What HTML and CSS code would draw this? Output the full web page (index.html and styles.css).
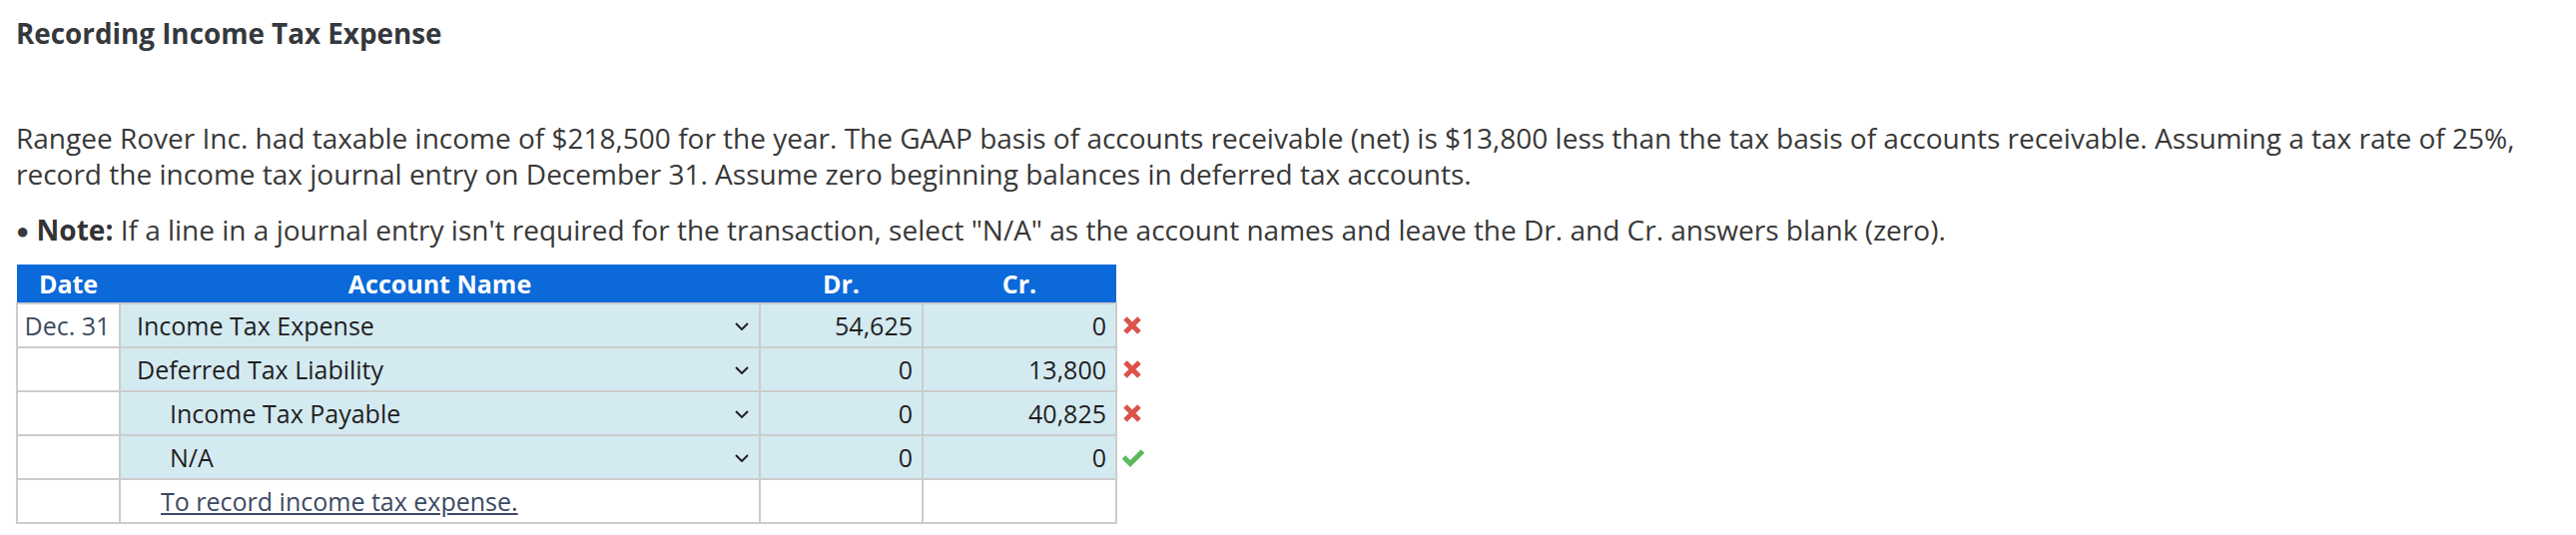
FILE: index.html
```html
<!DOCTYPE html>
<html lang="en">
<head>
<meta charset="utf-8">
<title>Recording Income Tax Expense</title>
<link rel="stylesheet" href="styles.css">
</head>
<body>
<div class="page">
  <h1 class="title">Recording Income Tax Expense</h1>
  <p class="problem">Rangee Rover Inc. had taxable income of $218,500 for the year. The GAAP basis of accounts receivable (net) is $13,800 less than the tax basis of accounts receivable. Assuming a tax rate of 25%, record the income tax journal entry on December 31. Assume zero beginning balances in deferred tax accounts.</p>
  <p class="note"><span class="bullet">&#9679;</span> <strong>Note:</strong> If a line in a journal entry isn't required for the transaction, select "N/A" as the account names and leave the Dr. and Cr. answers blank (zero).</p>
  <table class="journal">
    <colgroup>
      <col class="w-date"><col class="w-acct"><col class="w-dr"><col class="w-cr"><col class="w-mark">
    </colgroup>
    <thead>
      <tr><th>Date</th><th>Account Name</th><th>Dr.</th><th>Cr.</th><th class="mark-head"></th></tr>
    </thead>
    <tbody>
      <tr>
        <td class="date">Dec. 31</td>
        <td class="acct"><div class="select"><span>Income Tax Expense</span><svg class="chev" width="14" height="8" viewBox="0 0 14 8"><polyline points="1,1 7,7 13,1" fill="none" stroke="#222" stroke-width="2"/></svg></div></td>
        <td class="amt">54,625</td>
        <td class="amt">0</td>
        <td class="mark"><svg width="22" height="22" viewBox="0 0 22 22"><path d="M4 4 L18 18 M18 4 L4 18" stroke="#dc5349" stroke-width="5" stroke-linecap="butt"/></svg></td>
      </tr>
      <tr>
        <td class="date"></td>
        <td class="acct"><div class="select"><span>Deferred Tax Liability</span><svg class="chev" width="14" height="8" viewBox="0 0 14 8"><polyline points="1,1 7,7 13,1" fill="none" stroke="#222" stroke-width="2"/></svg></div></td>
        <td class="amt">0</td>
        <td class="amt">13,800</td>
        <td class="mark"><svg width="22" height="22" viewBox="0 0 22 22"><path d="M4 4 L18 18 M18 4 L4 18" stroke="#dc5349" stroke-width="5" stroke-linecap="butt"/></svg></td>
      </tr>
      <tr>
        <td class="date"></td>
        <td class="acct credit"><div class="select"><span>Income Tax Payable</span><svg class="chev" width="14" height="8" viewBox="0 0 14 8"><polyline points="1,1 7,7 13,1" fill="none" stroke="#222" stroke-width="2"/></svg></div></td>
        <td class="amt">0</td>
        <td class="amt">40,825</td>
        <td class="mark"><svg width="22" height="22" viewBox="0 0 22 22"><path d="M4 4 L18 18 M18 4 L4 18" stroke="#dc5349" stroke-width="5" stroke-linecap="butt"/></svg></td>
      </tr>
      <tr>
        <td class="date"></td>
        <td class="acct credit"><div class="select"><span>N/A</span><svg class="chev" width="14" height="8" viewBox="0 0 14 8"><polyline points="1,1 7,7 13,1" fill="none" stroke="#222" stroke-width="2"/></svg></div></td>
        <td class="amt">0</td>
        <td class="amt">0</td>
        <td class="mark"><svg width="24" height="22" viewBox="0 0 24 22"><path d="M2.5 11 L9 17.5 L21.5 5" fill="none" stroke="#5cb85c" stroke-width="5" stroke-linejoin="miter"/></svg></td>
      </tr>
      <tr class="memo-row">
        <td></td>
        <td class="memo"><a href="#">To record income tax expense.</a></td>
        <td></td>
        <td></td>
        <td class="mark"></td>
      </tr>
    </tbody>
  </table>
</div>
</body>
</html>
```

FILE: styles.css
```css
html, body {
  margin: 0;
  padding: 0;
  background: #ffffff;
}

.page {
  padding: 12px 16px 0 16px;
  font-family: "Open Sans", "Noto Sans", sans-serif;
  color: #383838;
}

.title {
  margin: 0;
  font-size: 27.8px;
  line-height: 42px;
  font-weight: 700;
  color: #35383c;
}

.problem {
  margin: 66px 0 0 0;
  font-size: 28px;
  line-height: 36px;
}

.note {
  margin: 20px 0 0 0;
  font-size: 28px;
  line-height: 36px;
}

.note strong {
  color: #333;
}

.bullet {
  font-size: 22px;
  vertical-align: 2px;
}

.journal {
  margin-top: 17px;
  border-collapse: collapse;
  table-layout: fixed;
  width: 1141px;
  font-size: 25px;
}

.w-date { width: 103px; }
.w-acct { width: 641px; }
.w-dr { width: 163px; }
.w-cr { width: 194px; }
.w-mark { width: 40px; }

.journal th {
  background: #0b69d9;
  color: #ffffff;
  font-weight: 700;
  height: 38px;
  padding: 0;
  text-align: center;
  line-height: 38px;
  border: none;
}

.journal th.mark-head {
  background: transparent;
}

.journal td {
  border: 2px solid #cccccc;
  height: 42px;
  padding: 0;
  color: #1f1f1f;
  line-height: 40px;
  vertical-align: middle;
}

.journal td.date {
  background: #ffffff;
  color: #404c60;
  text-align: center;
  padding-right: 2px;
}

.journal td.acct {
  background: #d4eaf1;
  padding-left: 16px;
  padding-right: 10px;
}

.journal td.acct.credit {
  padding-left: 49px;
}

.select {
  display: flex;
  align-items: center;
  justify-content: space-between;
}

.chev {
  display: block;
  margin-top: 2px;
}

.journal td.amt {
  background: #d4eaf1;
  text-align: right;
  padding-right: 9px;
}

.journal td.mark {
  border: none;
  padding-left: 4px;
}

.journal td.mark svg {
  display: block;
}

.memo-row td {
  background: #ffffff;
}

.journal td.memo {
  padding-left: 40px;
}

.memo a {
  color: #3c4a63;
  text-decoration: underline;
}
```
